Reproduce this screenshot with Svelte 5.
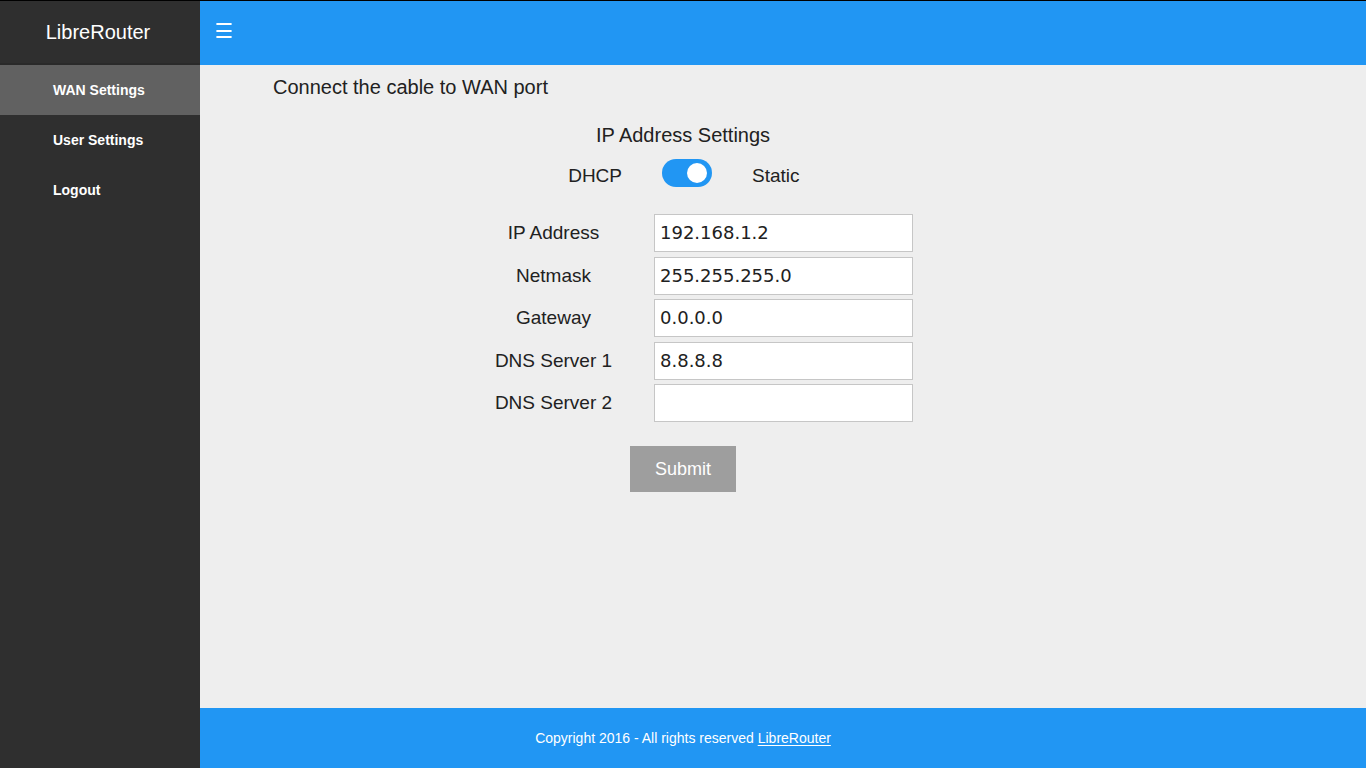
<script>
  let isStatic = $state(true);
  let menuOpen = $state(true);
  let fields = $state([
    { id: 'ip', label: 'IP Address', value: '192.168.1.2' },
    { id: 'netmask', label: 'Netmask', value: '255.255.255.0' },
    { id: 'gateway', label: 'Gateway', value: '0.0.0.0' },
    { id: 'dns1', label: 'DNS Server 1', value: '8.8.8.8' },
    { id: 'dns2', label: 'DNS Server 2', value: '' }
  ]);
  const links = ['WAN Settings', 'User Settings', 'Logout'];
</script>

<div class="page">
  {#if menuOpen}
    <aside>
      <div class="brand">LibreRouter</div>
      <nav>
        {#each links as link, i}
          <a href="#top" class:active={i === 0}>{link}</a>
        {/each}
      </nav>
    </aside>
  {/if}
  <div class="body">
    <header>
      <button class="menu" aria-label="Menu" onclick={() => (menuOpen = !menuOpen)}>
        <svg width="16" height="16" viewBox="0 0 16 16" fill="#fff" aria-hidden="true">
          <path d="M.4 0h15.2v2H.4zM.4 7h15.2v2H.4zM.4 13h15.2v2H.4z" />
        </svg>
      </button>
    </header>
    <main>
      <p class="intro">Connect the cable to WAN port</p>
      <form onsubmit={(e) => e.preventDefault()}>
        <h2>IP Address Settings</h2>
        <div class="mode">
          <label class="dhcp" for="mode">DHCP</label>
          <input id="mode" type="checkbox" role="switch" bind:checked={isStatic} />
          <label class="static" for="mode">Static</label>
        </div>
        <div class="fields">
          {#each fields as field (field.id)}
            <div class="row">
              <label for={field.id}>{field.label}</label>
              <input id={field.id} type="text" bind:value={field.value} />
            </div>
          {/each}
        </div>
        <button class="submit" type="submit">Submit</button>
      </form>
    </main>
    <footer>
      <p>Copyright 2016 - All rights reserved <a href="#top">LibreRouter</a></p>
    </footer>
  </div>
</div>

<style>
  :global(body) {
    margin: 0;
  }
  .page {
    box-sizing: border-box;
    display: flex;
    min-height: 100vh;
    border-top: 1px solid #000;
    background: #eee;
    color: #212121;
    font: 20px/24px "Liberation Sans", Arial, sans-serif;
  }
  aside {
    flex: 0 0 200px;
    background: #2f2f2f;
    color: #fff;
  }
  .brand {
    box-sizing: border-box;
    height: 64px;
    padding: 19px 4px 0 0;
    border-bottom: 2px solid #2a2a2a;
    text-align: center;
  }
  nav a {
    display: block;
    padding-left: 53px;
    color: #fff;
    font-size: 14px;
    font-weight: 700;
    line-height: 50px;
    text-decoration: none;
  }
  nav a.active {
    background: #616161;
  }
  .body {
    display: flex;
    flex: 1;
    flex-direction: column;
    min-width: 0;
  }
  header {
    display: flex;
    align-items: center;
    height: 64px;
    padding-left: 16px;
    background: #2196f3;
  }
  .menu {
    display: flex;
    padding: 0 0 4px;
    border: 0;
    background: none;
    cursor: pointer;
  }
  main {
    flex: 1;
    padding-right: 200px;
  }
  .intro {
    margin: 0;
    padding: 10px 0 0 73px;
  }
  form {
    display: flex;
    flex-direction: column;
    align-items: center;
    padding-top: 24px;
  }
  h2 {
    margin: 0;
    font-size: 20px;
    font-weight: 400;
  }
  .mode {
    display: grid;
    grid-template-columns: 1fr 50px 1fr;
    column-gap: 40px;
    align-items: start;
    margin-top: 12px;
    padding-left: 8px;
  }
  .mode label {
    padding-top: 5px;
    font-size: 19px;
  }
  .dhcp {
    text-align: right;
  }
  .mode input {
    appearance: none;
    display: flex;
    align-items: center;
    justify-content: flex-end;
    box-sizing: border-box;
    width: 50px;
    height: 28px;
    margin: 0;
    padding: 0 5px;
    border-radius: 14px;
    background: #2196f3;
    cursor: pointer;
  }
  .mode input::before {
    content: "";
    width: 20px;
    height: 20px;
    border-radius: 50%;
    background: #fff;
  }
  .mode input:not(:checked) {
    justify-content: flex-start;
    background: #9e9e9e;
  }
  .fields {
    display: grid;
    align-content: space-between;
    min-height: 208px;
    margin-top: 26px;
  }
  .row {
    display: grid;
    grid-template-columns: 201px 259px;
    align-items: center;
    text-align: center;
  }
  .row label {
    font-size: 19px;
  }
  .row input {
    box-sizing: border-box;
    width: 100%;
    height: 38px;
    padding: 0 5px 1px;
    border: 1px solid #c6c6c6;
    border-radius: 0;
    background: #fff;
    color: #212121;
    font: 18px "DejaVu Sans", sans-serif;
  }
  .submit {
    margin-top: 24px;
    padding: 0 25px;
    border: 0;
    background: #9e9e9e;
    color: #fff;
    font: 18px/46px "Liberation Sans", Arial, sans-serif;
    cursor: pointer;
  }
  footer {
    box-sizing: border-box;
    min-height: 60px;
    padding: 20px 200px 20px 0;
    background: #2196f3;
    color: #fff;
    font-size: 14px;
    line-height: 20px;
    text-align: center;
  }
  footer p {
    margin: 0;
  }
  footer a {
    color: #fff;
    text-underline-offset: 2px;
  }
</style>
